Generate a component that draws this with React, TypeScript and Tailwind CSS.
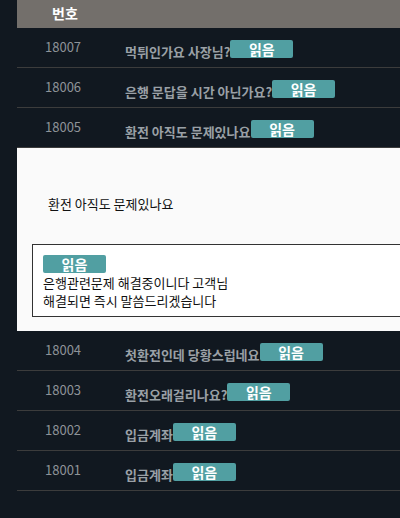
const rows = [
  { id: 18007, title: "먹튀인가요 사장님?" },
  { id: 18006, title: "은행 문답을 시간 아닌가요?" },
  { id: 18005, title: "환전 아직도 문제있나요", open: true },
  { id: 18004, title: "첫환전인데 당황스럽네요" },
  { id: 18003, title: "환전오래걸리나요?" },
  { id: 18002, title: "입금계좌" },
  { id: 18001, title: "입금계좌" },
];

const font = { fontFamily: '"Noto Sans CJK KR", "Noto Sans", sans-serif' };

function ReadBadge() {
  return (
    <span className="inline-flex h-[18px] w-[63px] shrink-0 items-center justify-center rounded-[2px] bg-[#519fa2] text-[14px] font-bold leading-none text-white">
      읽음
    </span>
  );
}

export default function App() {
  return (
    <div className="h-[518px] w-[400px] overflow-hidden bg-[#111820]" style={font}>
      <div className="ml-[17px] w-[420px]">
        <div className="flex h-[28px] items-start bg-[#736f6b] pl-[35px] pt-[3px] text-[14px] font-bold text-white">
          번호
        </div>
        {rows.map((r) => (
          <div key={r.id}>
            <div className="flex h-[40px] items-start border-b border-[#3c3c3c]">
              <div className="w-[108px] pl-[28px] pt-[11px] text-[13px] leading-[16px] text-[#8e9398]">
                {r.id}
              </div>
              <div className="flex items-end pt-[12px]">
                <span className="text-[13px] font-semibold leading-[13px] text-[#9aa0a6]">{r.title}</span>
                <ReadBadge />
              </div>
            </div>
            {r.open && (
              <div className="h-[183px] bg-[#fafafa] pl-[15px] pt-[48px] text-[#111]">
                <p className="pl-[16px] text-[13px] leading-[16px]">{r.title}</p>
                <div className="mt-[32px] h-[73px] border border-[#333] bg-white px-[10px] pt-[10px] text-[13px] leading-[18px]">
                  <ReadBadge />
                  <p>은행관련문제 해결중이니다 고객님</p>
                  <p>해결되면 즉시 말씀드리겠습니다</p>
                </div>
              </div>
            )}
          </div>
        ))}
      </div>
    </div>
  );
}
